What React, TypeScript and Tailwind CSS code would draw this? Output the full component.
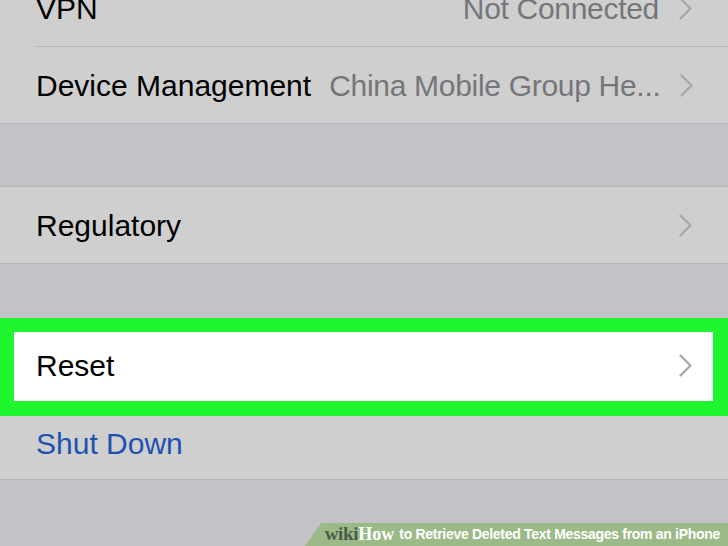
import React from "react";

function Chevron() {
  return (
    <svg width="13" height="23" viewBox="0 0 13 23" className="shrink-0">
      <polyline points="1.5,1.5 11.5,11.5 1.5,21.5" fill="none" stroke="#a7a7ab" strokeWidth="2.2" strokeLinecap="round" strokeLinejoin="round" />
    </svg>
  );
}

function Row({ label, value, separator }: { label: string; value?: string; separator?: boolean }) {
  return (
    <div className="h-[76px] pl-[35px] bg-[#cfcfcf]">
      <div className={`h-full flex items-center pr-[36px] ${separator ? "border-b border-[#b5b5b8]" : ""}`}>
        <span className="pl-px text-black whitespace-nowrap">{label}</span>
        <span className="ml-auto pl-[18px] whitespace-nowrap text-[#76767a] tracking-[-0.3px]">{value}</span>
        <span className="ml-[20px]">
          <Chevron />
        </span>
      </div>
    </div>
  );
}

export default function App() {
  return (
    <div
      className="relative w-[728px] h-[546px] overflow-hidden bg-[#c3c2c7] text-[30px]"
      style={{ fontFamily: '"Liberation Sans", Arial, sans-serif' }}
    >
      {/* upper group */}
      <div className="mt-[-29px] border-b border-[#b5b5b8]">
        <Row label="VPN" value="Not Connected" separator />
        <Row label="Device Management" value="China Mobile Group He..." />
      </div>

      <div className="h-[62px]" />

      {/* regulatory */}
      <div className="border-y border-[#b5b5b8]">
        <Row label="Regulatory" />
      </div>

      <div className="h-[54px]" />

      {/* highlighted reset row */}
      <div className="bg-[#1ff52f] pl-[14px] pr-[15px] pt-[14px] pb-[15px]">
        <div className="h-[69px] bg-white flex items-center pl-[22px] pr-[21px] pb-[2px]">
          <span className="text-black">Reset</span>
          <span className="ml-auto">
            <Chevron />
          </span>
        </div>
      </div>

      {/* shut down */}
      <div className="h-[64px] bg-[#cfcfcf] border-b border-[#b5b5b8] flex items-center pl-[36px] pb-[9px]">
        <span className="text-[#1f52b0]">Shut Down</span>
      </div>

      {/* watermark banner */}
      <div className="absolute right-0 bottom-0 w-[423px] h-[23px] bg-[#9bba87] [clip-path:polygon(16px_0,100%_0,100%_100%,0_100%)] flex items-center justify-end pr-[8px] whitespace-nowrap">
        <span className="text-[19px] font-bold text-[#4d5c47] tracking-[-0.3px]" style={{ fontFamily: '"Liberation Serif", serif' }}>
          wiki
        </span>
        <span className="text-[18px] font-bold text-white mr-[5px]" style={{ fontFamily: '"Liberation Serif", serif' }}>
          How
        </span>
        <span className="text-[14px] font-bold text-white tracking-[-0.3px]">to Retrieve Deleted Text Messages from an iPhone</span>
      </div>
    </div>
  );
}
